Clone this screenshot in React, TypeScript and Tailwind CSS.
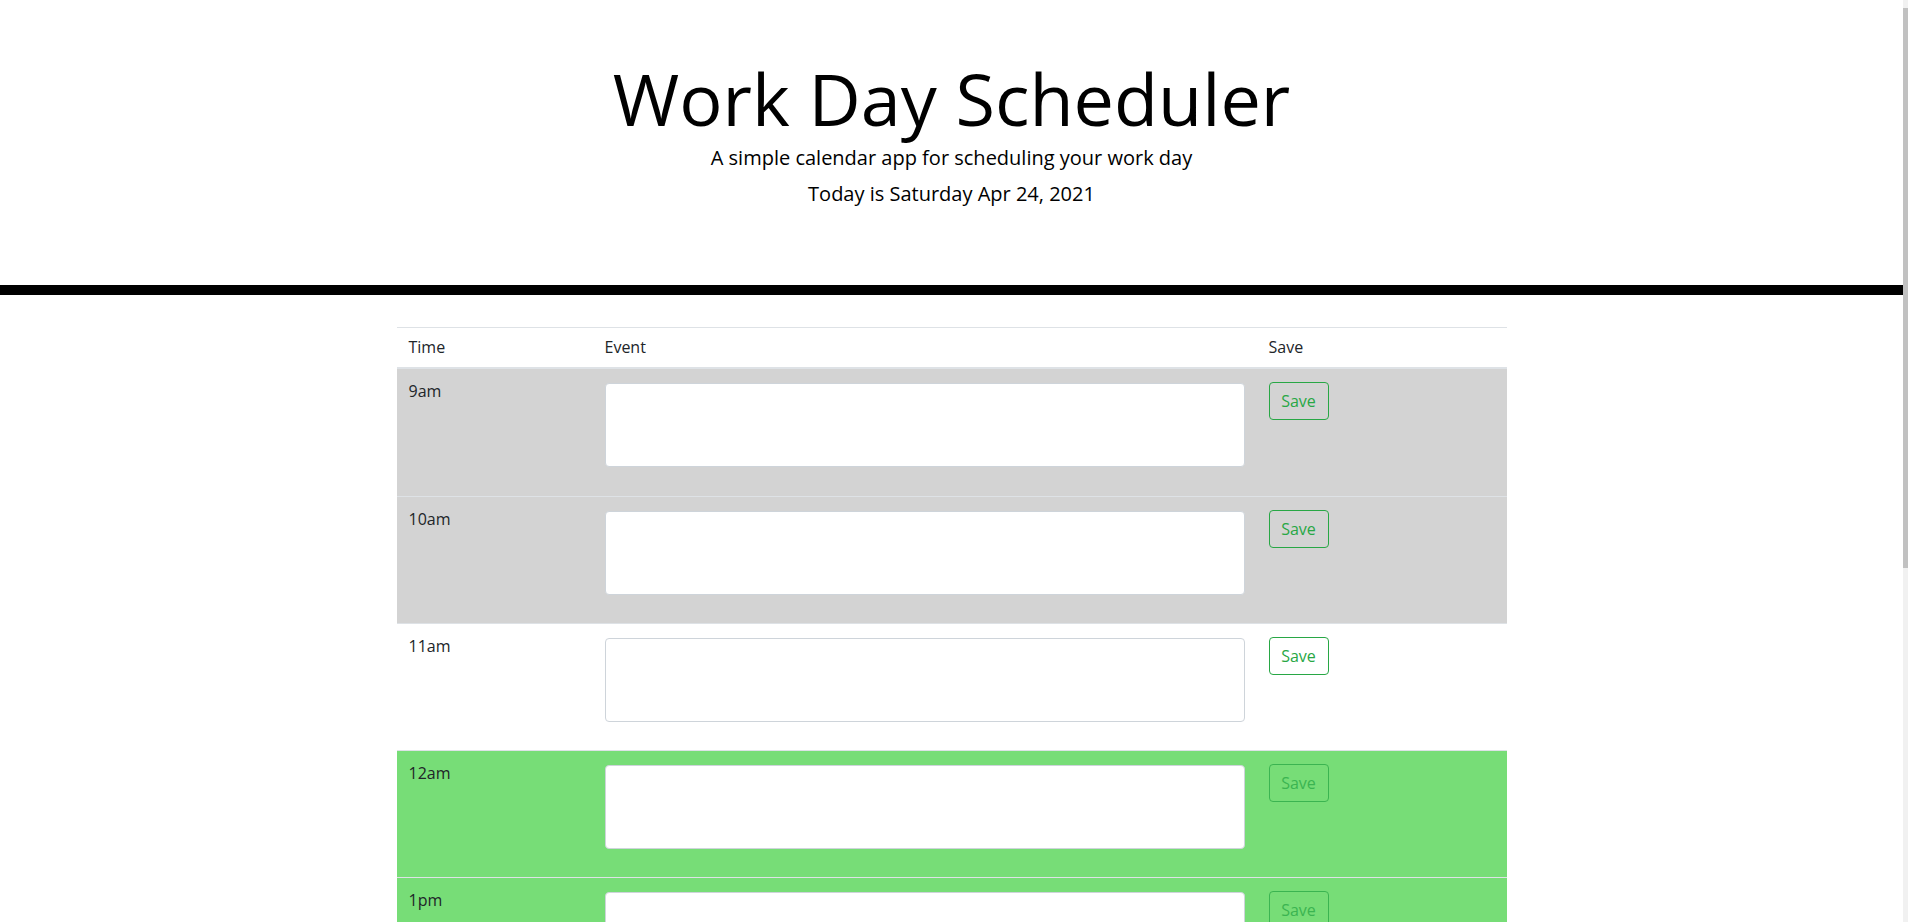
import React from 'react';

type Slot = {
  label: string;
  state: 'past' | 'present' | 'future';
};

const slots: Slot[] = [
  { label: '9am', state: 'past' },
  { label: '10am', state: 'past' },
  { label: '11am', state: 'present' },
  { label: '12am', state: 'future' },
  { label: '1pm', state: 'future' },
  { label: '2pm', state: 'future' },
  { label: '3pm', state: 'future' },
  { label: '4pm', state: 'future' },
  { label: '5pm', state: 'future' },
];

const rowBg = {
  past: 'bg-[#d3d3d3]',
  present: 'bg-white',
  future: 'bg-[#77dd77]',
};

function HourRow({ slot, first }: { slot: Slot; first: boolean }) {
  const future = slot.state === 'future';
  return (
    <div
      className={`grid h-[127px] grid-cols-[196px_664px_250px] ${rowBg[slot.state]} ${
        first ? '' : 'border-t border-[#dee2e6]'
      }`}
    >
      {/* Time */}
      <div className="px-3 pt-[10px] text-base leading-6">{slot.label}</div>

      {/* Event */}
      <div className="px-3 pt-[14px]">
        <textarea
          className="block h-[84px] w-full resize-none rounded-[4px] border border-[#ced4da] bg-white px-3 py-1.5 text-base leading-6 text-[#495057] outline-none"
          defaultValue=""
        />
      </div>

      {/* Save */}
      <div className="px-3 pt-[13px]">
        <button
          type="button"
          disabled={future}
          className={`h-[38px] w-[60px] rounded-[4px] border border-[#28a745] text-base leading-6 text-[#28a745] ${
            future ? 'opacity-75' : ''
          }`}
        >
          Save
        </button>
      </div>
    </div>
  );
}

export default function App() {
  return (
    <div className="flex h-screen overflow-hidden bg-white font-['Open_Sans',sans-serif] text-[#212529]">
      <div className="min-w-0 flex-1 overflow-y-auto [scrollbar-width:none]">
        <header className="border-b-[10px] border-black pb-[76px] pt-[55px] text-center">
          <h1 className="text-[72px] font-normal leading-[1.2] text-black">Work Day Scheduler</h1>
          <p className="mt-[2px] text-[20px] font-normal leading-[30px] text-black">
            A simple calendar app for scheduling your work day
          </p>
          <p className="mt-[6px] text-[20px] font-normal leading-[30px] text-black">
            Today is Saturday Apr 24, 2021
          </p>
        </header>

        <main className="mx-auto mt-8 w-[1110px] pb-4">
          <div className="grid grid-cols-[196px_664px_250px] border-b-2 border-t border-[#dee2e6] text-base leading-6">
            <div className="px-3 pb-[8px] pt-[7px]">Time</div>
            <div className="px-3 pb-[8px] pt-[7px]">Event</div>
            <div className="px-3 pb-[8px] pt-[7px]">Save</div>
          </div>
          {slots.map((slot, i) => (
            <HourRow key={slot.label} slot={slot} first={i === 0} />
          ))}
        </main>
      </div>

      {/* scrollbar track */}
      <div className="flex w-[5px] shrink-0 flex-col bg-[#f1f1f1] pt-[8px]">
        <div className="h-[560px] w-full bg-[#c1c1c1]" />
      </div>
    </div>
  );
}
